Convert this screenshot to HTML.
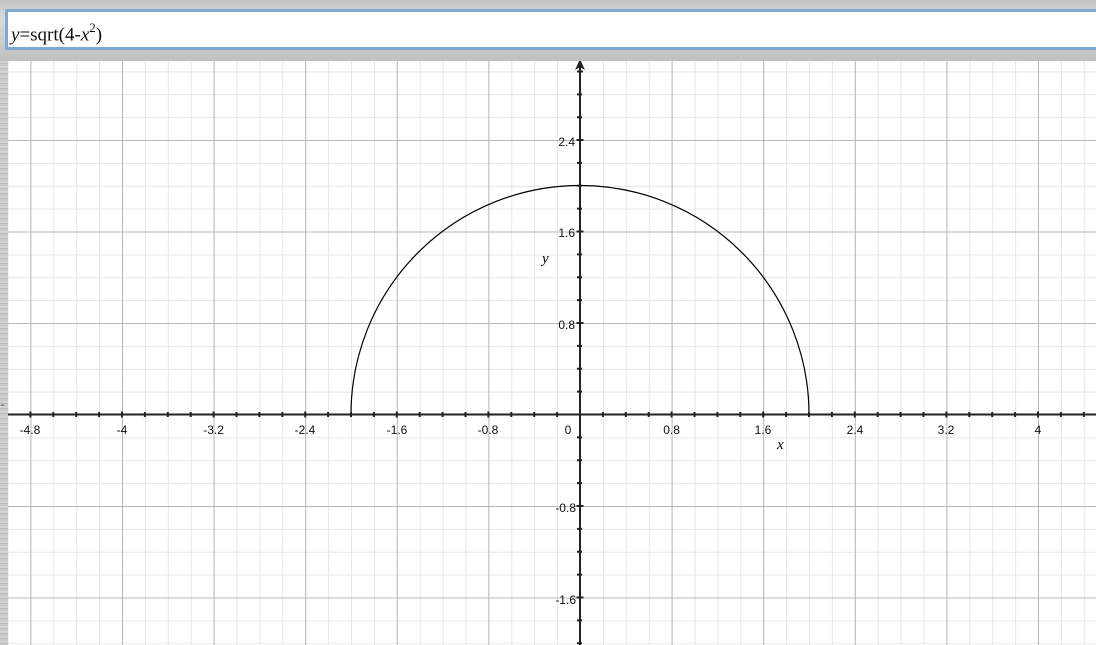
<!DOCTYPE html>
<html><head><meta charset="utf-8"><style>
html,body{margin:0;padding:0;width:1096px;height:645px;overflow:hidden;background:#c8c8c8;}
#top{position:absolute;left:0;top:0;width:1096px;height:61px;background:linear-gradient(#c4c4c4,#dadada 30%,#cccccc 70%,#c0c0c0);}
#left{position:absolute;left:0;top:61px;width:8px;height:584px;background:repeating-linear-gradient(#d2d2d2 0 2px,#bcbcbc 2px 3px,#cacaca 3px 5px);}
#field{position:absolute;left:5px;top:9px;width:1091px;height:41px;box-sizing:border-box;border:3px solid #7fa9d4;border-right:none;background:#fff;border-radius:2px 0 0 2px;}
#field span{position:absolute;left:3px;top:9px;font:19px "Liberation Serif",serif;color:#111;}
svg{position:absolute;left:0;top:0;}
</style></head><body>
<div id="top"></div><div id="left"></div>
<div id="field"><span><i>y</i>=sqrt(4-<i>x</i><sup style="font-size:13px;position:relative;top:-1px">2</sup>)</span></div>
<svg width="1096" height="645" font-family="Liberation Sans, sans-serif" font-size="12">
<defs>
<pattern id="mi" width="22.9" height="22.875" patternUnits="userSpaceOnUse" patternTransform="translate(580 414.5)">
<path d="M0.5 0V22.875M0 0.5H22.9" stroke="#e6e6e6" stroke-width="1" fill="none"/></pattern>
<pattern id="ma" width="91.6" height="91.5" patternUnits="userSpaceOnUse" patternTransform="translate(580 414.5)">
<path d="M0.5 0V91.5M0 0.5H91.6" stroke="#b8b8b8" stroke-width="1" fill="none"/></pattern>
<clipPath id="c"><rect x="8" y="61" width="1088" height="584"/></clipPath>
</defs>
<g clip-path="url(#c)">
<rect x="8" y="61" width="1088" height="584" fill="#fff"/>
<rect x="8" y="61" width="1088" height="584" fill="url(#mi)"/>
<rect x="8" y="61" width="1088" height="584" fill="url(#ma)"/>
<path d="M8 414.5H1096M580 64V645" stroke="#222" stroke-width="2"/>
<path d="M580 59L575 70L580 67L585 70Z" fill="#222"/>
<path d="M351 414.5A229 229 0 0 1 809 414.5" stroke="#000" fill="none" stroke-width="1.2"/>
</g>
<g fill="#111" text-anchor="middle">
<text x="30" y="434">-4.8</text><text x="122" y="434">-4</text><text x="213.6" y="434">-3.2</text>
<text x="305" y="434">-2.4</text><text x="397" y="434">-1.6</text><text x="488" y="434">-0.8</text>
<text x="568" y="434">0</text><text x="671.6" y="434">0.8</text><text x="763" y="434">1.6</text>
<text x="855" y="434">2.4</text><text x="946" y="434">3.2</text><text x="1038" y="434">4</text>
</g>
<g fill="#111" text-anchor="end">
<text x="575" y="146">2.4</text><text x="575" y="237">1.6</text><text x="575" y="329">0.8</text>
<text x="576" y="512">-0.8</text><text x="576" y="604">-1.6</text>
</g>
<text x="542" y="263" font-family="Liberation Serif, serif" font-style="italic" font-size="15">y</text>
<text x="777" y="449" font-family="Liberation Serif, serif" font-style="italic" font-size="15">x</text>
<text x="1" y="412" font-size="10" fill="#333">ˆ</text>
<path stroke="#222" stroke-width="2" d="
M30.4 411.5v6M53.3 412v5M76.2 412v5M99.1 412v5M122 411.5v6M144.9 412v5M167.8 412v5M190.7 412v5M213.6 411.5v6M236.5 412v5M259.4 412v5M282.3 412v5M305.2 411.5v6M328.1 412v5M351 412v5M373.9 412v5M396.8 411.5v6M419.7 412v5M442.6 412v5M465.5 412v5M488.4 411.5v6M511.3 412v5M534.2 412v5M557.1 412v5
M602.9 412v5M625.8 412v5M648.7 412v5M671.6 411.5v6M694.5 412v5M717.4 412v5M740.3 412v5M763.2 411.5v6M786.1 412v5M809 412v5M831.9 412v5M854.8 411.5v6M877.7 412v5M900.6 412v5M923.5 412v5M946.4 411.5v6M969.3 412v5M992.2 412v5M1015.1 412v5M1038 411.5v6M1060.9 412v5M1083.8 412v5
M577 71.5h6M577 94.4h5M577 117.3h5M576.5 140h7M577 162.9h5M577 185.8h5M577 208.6h5M576.5 231.5h7M577 254.4h5M577 277.3h5M577 300.1h5M576.5 323h7M577 345.9h5M577 368.8h5M577 391.6h5
M577 437.4h5M577 460.3h5M577 483.1h5M576.5 506h7M577 528.9h5M577 551.8h5M577 574.6h5M576.5 597.5h7M577 620.4h5M577 643.3h5"/>
</svg>
</body></html>
